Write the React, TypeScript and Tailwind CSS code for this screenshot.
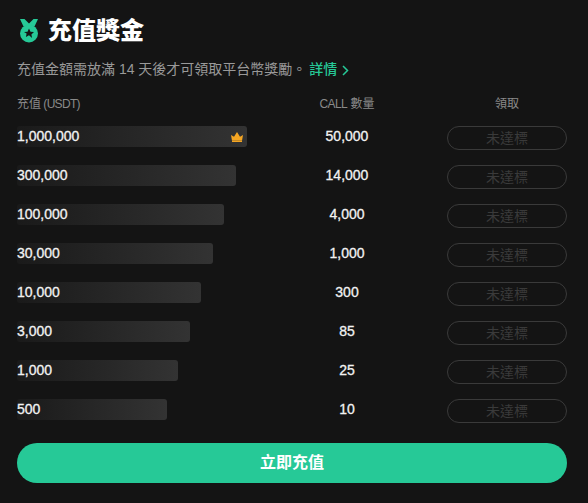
import React from 'react';

const rows = [
  { amount: '1,000,000', call: '50,000', width: 230, crown: true },
  { amount: '300,000', call: '14,000', width: 219 },
  { amount: '100,000', call: '4,000', width: 207 },
  { amount: '30,000', call: '1,000', width: 196 },
  { amount: '10,000', call: '300', width: 184 },
  { amount: '3,000', call: '85', width: 173 },
  { amount: '1,000', call: '25', width: 161 },
  { amount: '500', call: '10', width: 150 },
];

const MedalIcon = () => (
  <svg className="ml-[3px] mb-[1px]" width="18" height="24" viewBox="0 0 18 24" fill="none">
    <path d="M0 0h4.500L9 4.500 13.500 0H18l-3.500 7.500L9 6 3.500 7.500z" fill="#26C997" />
    <circle cx="9" cy="14.500" r="9" fill="#26C997" />
    <path d="M9 9.500l1.500 3.200 3.500.4-2.600 2.400.7 3.500L9 16.300l-3.100 1.700.7-3.500L4 13.100l3.500-.4z" fill="#141414" />
  </svg>
);

const CrownIcon = () => (
  <svg width="12" height="10" viewBox="0 0 12 10" fill="#F5A623">
    <path d="M1 8.800L0 3l3 1.800L6 0l3 4.800L12 3l-1 5.800z" />
    <rect x="1" y="9" width="10" height="1" />
  </svg>
);

export default function App() {
  return (
    <div className="w-[588px] h-[503px] overflow-hidden bg-[#141414] pl-[17px] font-['Liberation_Sans','Noto_Sans_CJK_TC',sans-serif]">
      <div className="box-content flex h-[34px] items-center gap-[10px] pt-[14px]">
        <MedalIcon />
        <h1 className="text-2xl font-black text-white">充值獎金</h1>
      </div>

      <p className="mt-[11px] flex h-5 items-center text-sm text-[#999999]">
        充值金額需放滿 14 天後才可領取平台幣獎勵。
        <span className="ml-[3px] font-medium text-[#26C997]">詳情</span>
        <svg className="ml-[5px] mt-[2px]" width="7" height="11" viewBox="0 0 7 11" fill="none">
          <path d="M1 1l4.500 4.500L1 10" stroke="#26C997" strokeWidth="1.500" />
        </svg>
      </p>

      <div className="mt-[15px] grid h-5 grid-cols-[230px_200px_120px] items-center text-xs text-[#8a8a8a]">
        <span>
          充值 <span className="-ml-px text-[12px] tracking-[-0.7px]">(USDT)</span>
        </span>
        <span className="text-center">
          <span className="text-[12px] tracking-[-0.6px]">CALL</span> 數量
        </span>
        <span className="text-center">領取</span>
      </div>

      <div className="mt-3 flex flex-col gap-[15px]">
        {rows.map((row) => (
          <div key={row.amount} className="grid h-6 grid-cols-[230px_200px_120px]">
            <div
              className="flex h-[21px] items-center justify-between rounded-[3px] bg-gradient-to-r from-[#1a1a1a] to-[#333333] pr-[4px]"
              style={{ width: row.width }}
            >
              <span className="pb-[2px] text-sm text-[#f2f2f2] [-webkit-text-stroke:0.3px_#f2f2f2]">{row.amount}</span>
              {row.crown && <CrownIcon />}
            </div>
            <div className="h-[21px] text-center text-sm leading-[21px] text-[#f2f2f2] [-webkit-text-stroke:0.3px_#f2f2f2]">
              {row.call}
            </div>
            <button className="h-6 rounded-full border border-[#3a3a3a] text-sm text-[#3a3a3a]">未達標</button>
          </div>
        ))}
      </div>

      <button className="mt-[20px] h-10 w-[550px] rounded-full bg-[#26C997] text-base font-bold text-white">
        立即充值
      </button>
    </div>
  );
}
